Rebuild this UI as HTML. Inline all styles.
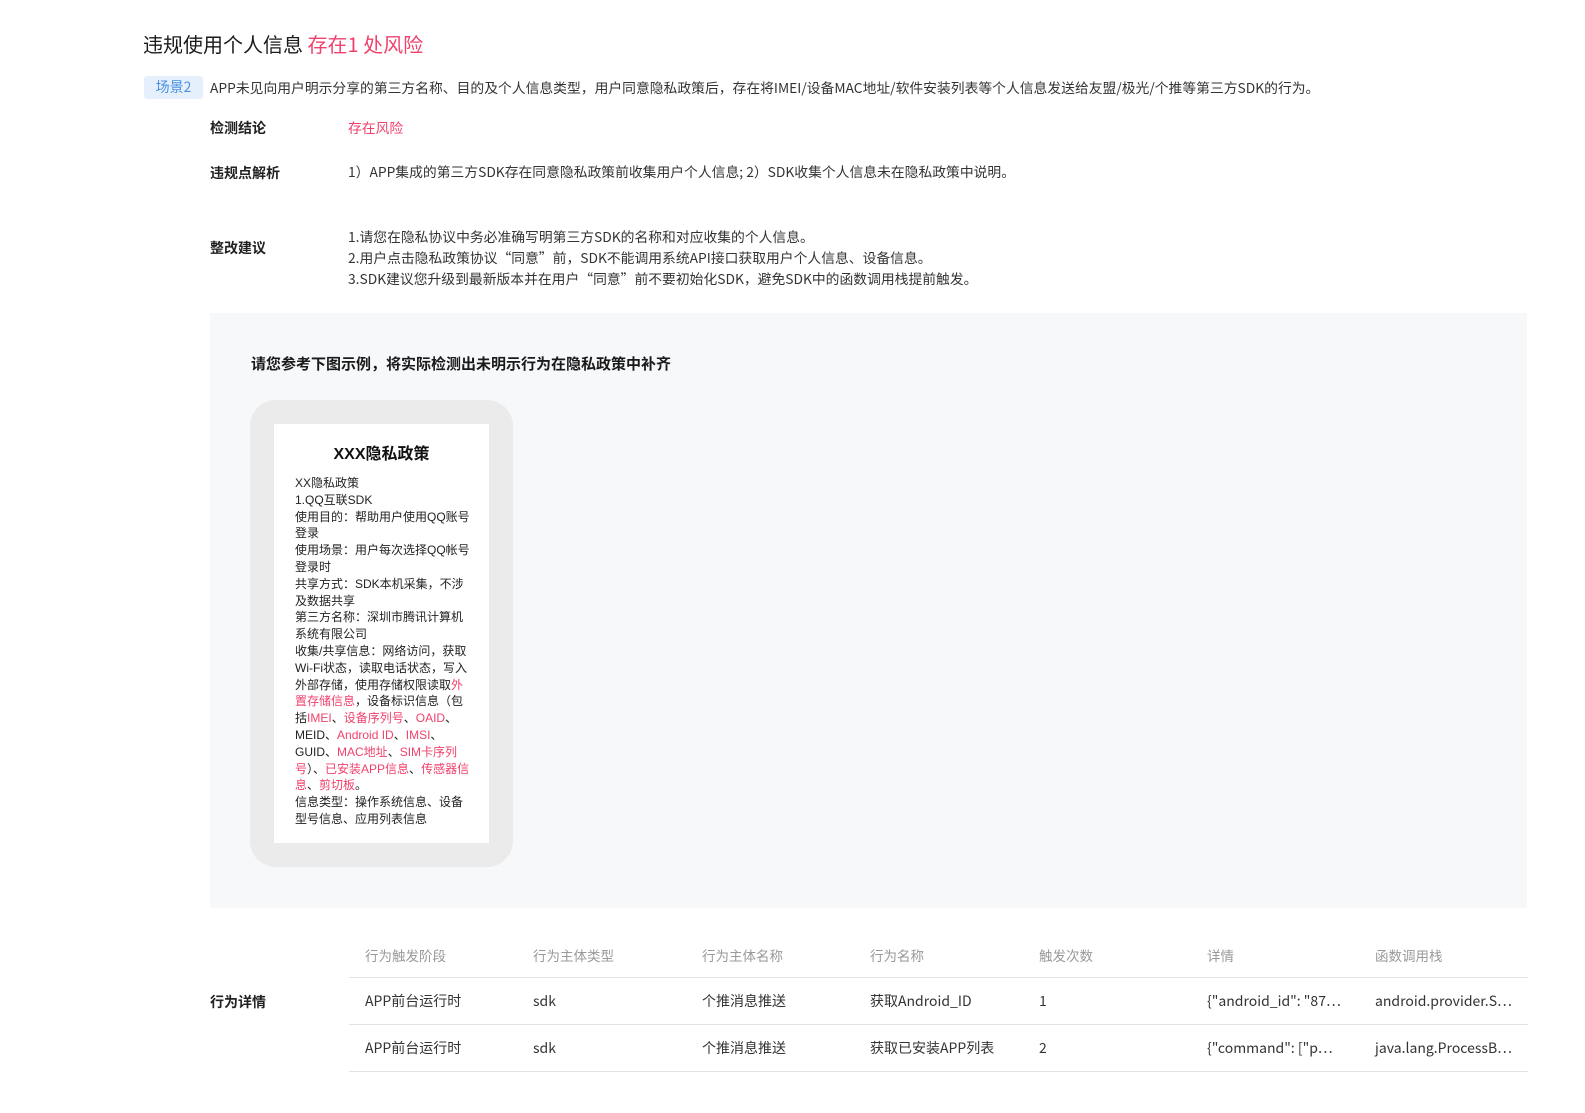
<!DOCTYPE html>
<html><head><meta charset="utf-8"><style>
*{margin:0;padding:0;box-sizing:border-box}
body{width:1585px;height:1113px;background:#fff;font-family:"Noto Sans CJK SC","Liberation Sans",sans-serif;color:#333;position:relative;overflow:hidden}
.a{position:absolute;white-space:nowrap}
.lbl{font-size:14px;font-weight:600;color:#222;left:210px}
.v{font-size:13.8px;color:#333;left:348px}
.th{font-size:13.5px;color:#999}
.td{font-size:14px;color:#333}
.ln{position:absolute;left:349px;width:1179px;height:1px;background:#e3e3e3}
.ph{font-family:"Liberation Sans","Noto Sans CJK SC",sans-serif;font-size:12px;line-height:16.8px;color:#222;white-space:normal}
.r{color:#f0416c !important}
</style></head><body>
<div class="a" style="left:143px;top:29px;font-size:20px;color:#1a1a1a">违规使用个人信息 <span class="r">存在1 处风险</span></div>
<div class="a" style="left:144px;top:76px;width:59px;height:23px;background:#e6f0fd;border-radius:3px;color:#4a90e2;font-size:14px;line-height:23px;text-align:center">场景2</div>
<div class="a" style="left:210px;top:77px;font-size:13.8px;color:#333">APP未见向用户明示分享的第三方名称、目的及个人信息类型，用户同意隐私政策后，存在将IMEI/设备MAC地址/软件安装列表等个人信息发送给友盟/极光/个推等第三方SDK的行为。</div>
<div class="a lbl" style="top:118px">检测结论</div>
<div class="a v r" style="top:117px">存在风险</div>
<div class="a lbl" style="top:163px">违规点解析</div>
<div class="a v" style="top:161px">1）APP集成的第三方SDK存在同意隐私政策前收集用户个人信息; 2）SDK收集个人信息未在隐私政策中说明。</div>
<div class="a lbl" style="top:238px">整改建议</div>
<div class="a v" style="top:226px;line-height:21px">1.请您在隐私协议中务必准确写明第三方SDK的名称和对应收集的个人信息。<br>2.用户点击隐私政策协议“同意”前，SDK不能调用系统API接口获取用户个人信息、设备信息。<br>3.SDK建议您升级到最新版本并在用户“同意”前不要初始化SDK，避免SDK中的函数调用栈提前触发。</div>
<div class="a" style="left:210px;top:313px;width:1317px;height:595px;background:#f7f8fa"></div>
<div class="a" style="left:251px;top:353px;font-size:15px;font-weight:700;color:#1a1a1a">请您参考下图示例，将实际检测出未明示行为在隐私政策中补齐</div>
<div class="a" style="left:250px;top:400px;width:263px;height:467px;background:#ebebeb;border-radius:26px"></div>
<div class="a" style="left:274px;top:424px;width:215px;height:419px;background:#fff"></div>
<div class="a" style="left:274px;top:440px;width:215px;text-align:center;font-size:16px;font-weight:700;color:#111;font-family:'Liberation Sans','Noto Sans CJK SC',sans-serif">XXX隐私政策</div>
<div class="a ph" style="left:295px;top:475px;width:178px">XX隐私政策<br>1.QQ互联SDK<br>使用目的：帮助用户使用QQ账号登录<br>使用场景：用户每次选择QQ帐号登录时<br>共享方式：SDK本机采集，不涉及数据共享<br>第三方名称：深圳市腾讯计算机系统有限公司<br>收集/共享信息：网络访问，获取Wi-Fi状态，读取电话状态，写入外部存储，使用存储权限读取<span class="r">外置存储信息</span>，设备标识信息（包括<span class="r">IMEI</span>、<span class="r">设备序列号</span>、<span class="r">OAID</span>、MEID、<span class="r">Android ID</span>、<span class="r">IMSI</span>、GUID、<span class="r">MAC地址</span>、<span class="r">SIM卡序列号</span>）、<span class="r">已安装APP信息</span>、<span class="r">传感器信息</span>、<span class="r">剪切板</span>。<br>信息类型：操作系统信息、设备型号信息、应用列表信息</div>
<div class="a th" style="left:365px;top:945px">行为触发阶段</div>
<div class="a th" style="left:533px;top:945px">行为主体类型</div>
<div class="a th" style="left:702px;top:945px">行为主体名称</div>
<div class="a th" style="left:870px;top:945px">行为名称</div>
<div class="a th" style="left:1039px;top:945px">触发次数</div>
<div class="a th" style="left:1207px;top:945px">详情</div>
<div class="a th" style="left:1375px;top:945px">函数调用栈</div>
<div class="ln" style="top:977px"></div>
<div class="a lbl" style="top:992px">行为详情</div>
<div class="a td" style="left:365px;top:991px">APP前台运行时</div>
<div class="a td" style="left:533px;top:991px">sdk</div>
<div class="a td" style="left:702px;top:991px">个推消息推送</div>
<div class="a td" style="left:870px;top:991px">获取Android_ID</div>
<div class="a td" style="left:1039px;top:991px">1</div>
<div class="a td" style="left:1207px;top:991px">{"android_id": "87⋯</div>
<div class="a td" style="left:1375px;top:991px">android.provider.S⋯</div>
<div class="ln" style="top:1024px"></div>
<div class="a td" style="left:365px;top:1038px">APP前台运行时</div>
<div class="a td" style="left:533px;top:1038px">sdk</div>
<div class="a td" style="left:702px;top:1038px">个推消息推送</div>
<div class="a td" style="left:870px;top:1038px">获取已安装APP列表</div>
<div class="a td" style="left:1039px;top:1038px">2</div>
<div class="a td" style="left:1207px;top:1038px">{"command": ["p⋯</div>
<div class="a td" style="left:1375px;top:1038px">java.lang.ProcessB⋯</div>
<div class="ln" style="top:1071px"></div>
</body></html>
